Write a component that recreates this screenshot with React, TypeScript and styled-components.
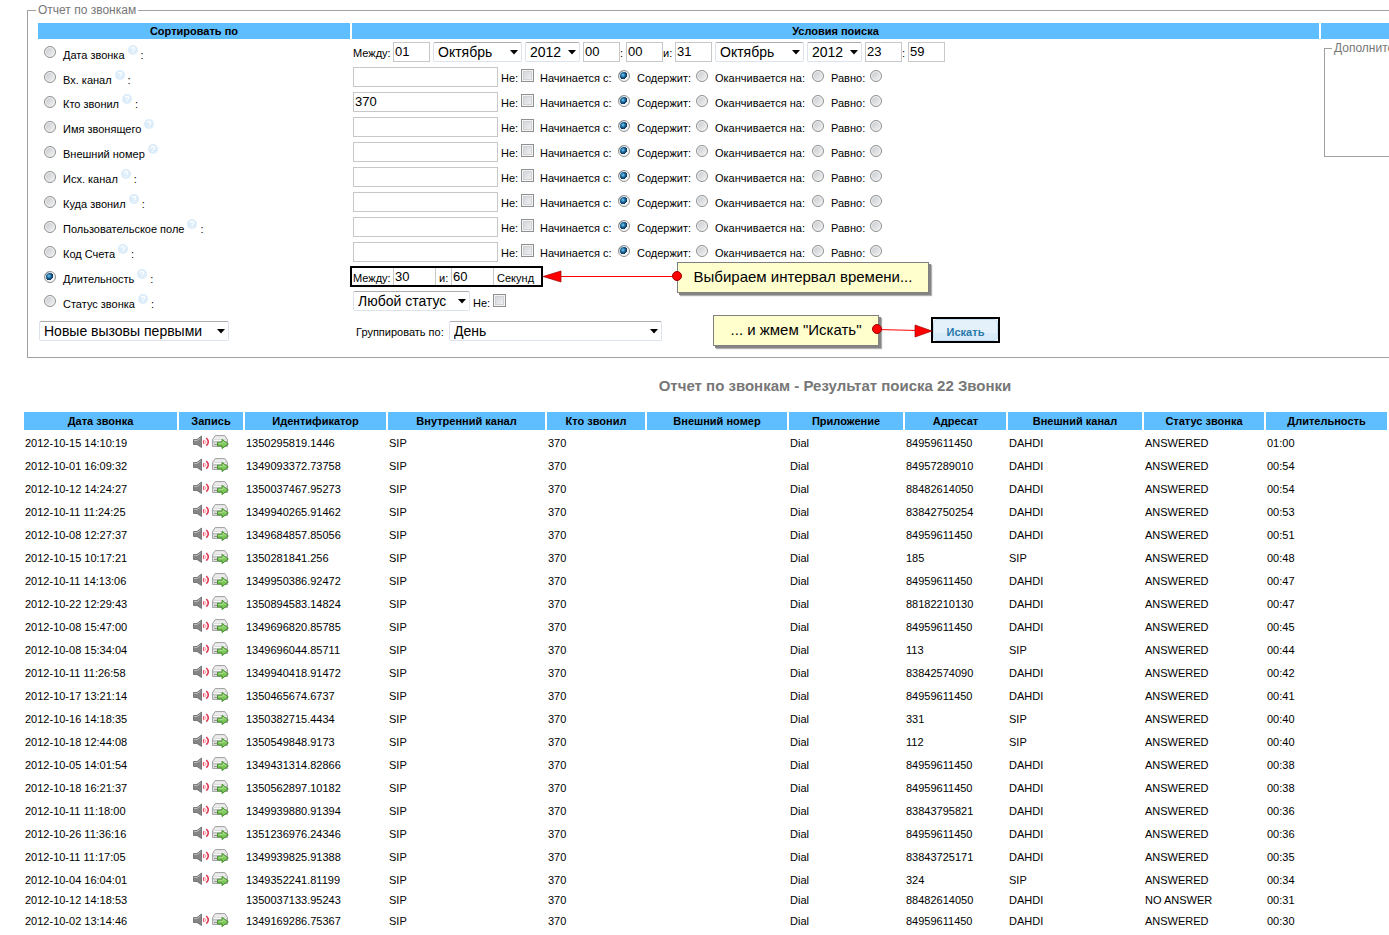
import React from "react";
import styled, { createGlobalStyle } from "styled-components";

const GlobalStyle = createGlobalStyle`
  * { box-sizing: border-box; }
  body {
    margin: 0;
    background: #fff;
    color: #000;
    font: 11px/14px "Liberation Sans", Arial, sans-serif;
  }
`;

const Page = styled.main`
  padding: 4px 0 0 22px;
  overflow: hidden;
`;

/* The search area is wider than the results and runs past the right edge. */
const SearchArea = styled.section`
  margin: 0 -254px 0 5px;
`;

const Fieldset = styled.fieldset`
  margin: 0;
  min-width: 0;
  padding: 6px 10px 8px;
  border: 1px solid #a0a0a0;
`;

const Legend = styled.legend`
  margin-left: -2px;
  padding: 0 2px;
  font-size: 12px;
  line-height: 13px;
  color: #777;
  white-space: nowrap;
`;

const FilterGrid = styled.div`
  display: grid;
  grid-template-columns: 312px 1fr 311px;
  column-gap: 2px;
`;

const ColumnTitle = styled.h2`
  margin: 0;
  height: 16px;
  background: #5fbeff;
  font-size: 11px;
  line-height: 16px;
  text-align: center;
`;

const Column = styled.div`
  position: relative;
`;

const FilterRow = styled.div<{ $h?: number }>`
  display: flex;
  align-items: center;
  height: ${(p) => p.$h ?? 25}px;
  padding-left: 1px;
  white-space: nowrap;
`;

const SortLabel = styled.label`
  display: flex;
  align-items: center;
  padding-left: 5px;
`;

const SortText = styled.span`
  padding: 5px 3px 0 7px;
`;

const Colon = styled.span`
  padding: 5px 0 0 3px;
`;

const HelpMark = styled.svg`
  width: 10px;
  height: 10px;
  margin-bottom: 5px;
`;

const Radio = styled.input.attrs({ type: "radio" })`
  appearance: none;
  flex: none;
  width: 12px;
  height: 12px;
  margin: 0;
  border: 1px solid #8e8f8f;
  border-radius: 50%;
  background: linear-gradient(135deg, #c4c8cd, #f4f4f4);
  box-shadow: inset 0 0 0 1px #f4f4f4;
  &:checked {
    background: radial-gradient(circle at 4px 4px, #7fd0f5 0, #1e6fa3 2px, #0d2f52 4px, #f4f4f4 4px);
  }
`;

const Checkbox = styled.input.attrs({ type: "checkbox" })`
  appearance: none;
  flex: none;
  width: 13px;
  height: 13px;
  margin: 0;
  border: 1px solid #8e8f8f;
  background: linear-gradient(135deg, #cbcfd5, #f6f6f6);
  box-shadow: inset 0 0 0 1px #f4f4f4, inset 0 0 0 2px #d0d2d5;
`;

const TextBox = styled.input<{ $w: number }>`
  width: ${(p) => p.$w}px;
  height: 20px;
  padding: 0 1px;
  border: 1px solid #c8c8c8;
  border-radius: 0;
  background: #fff;
  color: #000;
  font: 13px/18px "Liberation Sans", Arial, sans-serif;
`;

const SelectBox = styled.span<{ $w: number }>`
  position: relative;
  flex: none;
  width: ${(p) => p.$w}px;
  height: 20px;
  svg {
    position: absolute;
    top: 8px;
    right: 4px;
    pointer-events: none;
  }
`;

const Select = styled.select`
  appearance: none;
  width: 100%;
  height: 20px;
  padding: 0 14px 0 4px;
  border: 1px solid #dde3ec;
  border-top-color: #abadb3;
  border-radius: 2px;
  background: #fff;
  color: #000;
  font: 14px/18px "Liberation Sans", Arial, sans-serif;
`;

const Dates = styled.div`
  display: flex;
  align-items: center;
  gap: 3px;
`;

const TimePair = styled.span`
  display: flex;
  align-items: center;
`;

const Caption = styled.span<{ $w: number }>`
  width: ${(p) => p.$w}px;
  padding-top: 2px;
`;

const MatchRow = styled.div`
  display: grid;
  grid-template-columns: 148px 39px 97px 78px 116px 58px;
  align-items: center;
`;

const Choice = styled.label<{ $end: number }>`
  display: flex;
  align-items: center;
  justify-content: space-between;
  padding-right: ${(p) => p.$end}px;
  span { padding-top: 3px; }
  input { margin-bottom: 2px; }
`;

const StatusRow = styled.div`
  display: grid;
  grid-template-columns: 120px 39px;
  align-items: center;
`;

const Duration = styled.div`
  display: flex;
  align-items: center;
  height: 21px;
  margin-left: -3px;
  padding: 0 6px 0 1px;
  border: 2px solid #000;
  input {
    height: 17px;
    border-width: 0 1px;
  }
`;

const SearchFrame = styled.div`
  margin: -2px 0 0 269px;
  border: 2px solid #000;
  background: #fff;
`;

const SearchButton = styled.button`
  display: block;
  width: 65px;
  height: 22px;
  padding: 4px 0 0;
  border: 1px solid #c3ddf0;
  border-radius: 4px;
  background: linear-gradient(#e4f1fb 65%, #d7ebf9 65%);
  color: #2779aa;
  font: bold 11px/15px "Liberation Sans", Arial, sans-serif;
`;

const ExtraFieldset = styled(Fieldset)`
  height: 115px;
  margin: 3px 3px 0;
  padding: 0 9px;
`;

const Note = styled.div<{ $x: number; $y: number; $w: number }>`
  position: absolute;
  left: ${(p) => p.$x}px;
  top: ${(p) => p.$y}px;
  width: ${(p) => p.$w}px;
  height: 31px;
  border: 1px solid #808080;
  background: #ffffce;
  box-shadow: 2px 2px 0 #858585, 3px 3px 1px #b0b0b0;
  font-size: 15px;
  line-height: 28px;
  text-align: center;
  white-space: nowrap;
`;

const Arrows = styled.svg`
  position: absolute;
  left: 0;
  top: 0;
  pointer-events: none;
`;

const Title = styled.h1`
  margin: 18px 0 14px;
  color: #777;
  font-size: 15px;
  line-height: 20px;
  text-align: center;
`;

const Results = styled.table`
  width: 100%;
  table-layout: fixed;
  border-collapse: separate;
  border-spacing: 2px;
`;

const HeadCell = styled.th`
  padding: 1px 0;
  background: #5fbeff;
  line-height: 16px;
  white-space: nowrap;
`;

const Cell = styled.td`
  padding: 1px;
  white-space: nowrap;
`;

const RecordIcons = styled.div`
  display: flex;
  align-items: center;
  justify-content: center;
  gap: 2px;
  height: 19px;
  padding-bottom: 2px;
`;

const Help = () => (
  <HelpMark viewBox="0 0 10 10" aria-hidden="true">
    <circle cx="5" cy="5" r="5" fill="#dcedf9" />
    <path d="M3.4 4C3.4 1.9 6.7 1.9 6.7 3.9C6.7 5 5 5 5 6.3M5 7.2V8.2" fill="none" stroke="#fff" strokeWidth="1.2" />
  </HelpMark>
);

const SpeakerIcon = () => (
  <svg width="17" height="14" viewBox="0 0 17 14" aria-hidden="true">
    <path d="M.5 4.500H4L8.500 1V12.500L4 9.500H.5Z" fill="#858585" stroke="#666" strokeWidth=".8" />
    <path d="M1 5.500H4.200L7.500 3" fill="none" stroke="#bbb" />
    <path d="M11 5Q9.800 7 11 9" fill="none" stroke="#f0506a" strokeWidth="1.300" />
    <path d="M13.300 3Q17.300 7 13.300 10.700" fill="none" stroke="#e23a55" strokeWidth="1.600" />
    <path d="M12.300 5.500Q13.700 7 12.300 8.500" fill="none" stroke="#f59aa8" />
  </svg>
);

const DriveIcon = () => (
  <svg width="17" height="15" viewBox="0 0 17 15" aria-hidden="true">
    <path d="M3.200 1.500H12.800L15.500 5.500V12.500H.5V5.500Z" fill="#dcdcdc" stroke="#a6a6a6" />
    <path d="M3.500 2.500H12.500L14 5H2Z" fill="#ececec" />
    <path d="M1 6H15V8.500H1Z" fill="#c2c2c2" />
    <path d="M1.500 6.500H14.500" stroke="#fafafa" />
    <path d="M2 10.500H7" stroke="#999" />
    <path d="M5.500 8.200H10V5.300L16.300 10L10 14.600V12H5.500Z" fill="#7cc657" stroke="#3f8a2a" strokeWidth=".9" />
    <path d="M6.500 9.300H11V7.500L14 9.800" fill="none" stroke="#b5e59c" strokeWidth=".8" />
  </svg>
);

type PickProps = { width: number; label: string; options: string[] };
const Pick = ({ width, label, options }: PickProps) => (
  <SelectBox $w={width}>
    <Select aria-label={label}>
      {options.map((o) => (
        <option key={o}>{o}</option>
      ))}
    </Select>
    <svg width="8" height="5" viewBox="0 0 8 5" aria-hidden="true">
      <path d="M0 0H8L4 4.500Z" />
    </svg>
  </SelectBox>
);

const sortFields: { name: string; colon: boolean; h?: number }[] = [
  { name: "Дата звонка", colon: true, h: 26 },
  { name: "Вх. канал", colon: true, h: 24 },
  { name: "Кто звонил", colon: true },
  { name: "Имя звонящего", colon: false },
  { name: "Внешний номер", colon: false },
  { name: "Исх. канал", colon: true },
  { name: "Куда звонил", colon: true },
  { name: "Пользовательское поле", colon: true },
  { name: "Код Счета", colon: true },
  { name: "Длительность", colon: true },
  { name: "Статус звонка", colon: true, h: 24 },
];

const modes = ["Начинается с:", "Содержит:", "Оканчивается на:", "Равно:"];

const DateRange = () => (
  <Dates>
    <TimePair>
      <Caption $w={40}>Между:</Caption>
      <TextBox $w={37} defaultValue="01" aria-label="День начала" />
    </TimePair>
    <Pick width={89} label="Месяц начала" options={["Октябрь", "Ноябрь"]} />
    <Pick width={55} label="Год начала" options={["2012", "2011"]} />
    <TimePair>
      <TextBox $w={37} defaultValue="00" aria-label="Час начала" />
      <Caption $w={6}>:</Caption>
      <TextBox $w={37} defaultValue="00" aria-label="Минута начала" />
      <Caption $w={12}>и:</Caption>
      <TextBox $w={37} defaultValue="31" aria-label="День конца" />
    </TimePair>
    <Pick width={89} label="Месяц конца" options={["Октябрь", "Ноябрь"]} />
    <Pick width={55} label="Год конца" options={["2012", "2011"]} />
    <TimePair>
      <TextBox $w={37} defaultValue="23" aria-label="Час конца" />
      <Caption $w={6}>:</Caption>
      <TextBox $w={37} defaultValue="59" aria-label="Минута конца" />
    </TimePair>
  </Dates>
);

const Not = () => (
  <Choice $end={6}>
    <span>Не:</span>
    <Checkbox />
  </Choice>
);

const Match = ({ name }: { name: string }) => (
  <MatchRow>
    <TextBox $w={145} aria-label={name} defaultValue={name === "Кто звонил" ? "370" : ""} />
    <Not />
    {modes.map((m, i) => (
      <Choice key={m} $end={7}>
        <span>{m}</span>
        <Radio name={`mode-${name}`} defaultChecked={i === 0} />
      </Choice>
    ))}
  </MatchRow>
);

const columns: [string, number][] = [
  ["Дата звонка", 153],
  ["Запись", 64],
  ["Идентификатор", 141],
  ["Внутренний канал", 157],
  ["Кто звонил", 98],
  ["Внешний номер", 140],
  ["Приложение", 114],
  ["Адресат", 101],
  ["Внешний канал", 134],
  ["Статус звонка", 120],
  ["Длительность", 121],
];

const calls = [
  ["2012-10-15 14:10:19", "1350295819.1446", "84959611450", "DAHDI", "01:00"],
  ["2012-10-01 16:09:32", "1349093372.73758", "84957289010", "DAHDI", "00:54"],
  ["2012-10-12 14:24:27", "1350037467.95273", "88482614050", "DAHDI", "00:54"],
  ["2012-10-11 11:24:25", "1349940265.91462", "83842750254", "DAHDI", "00:53"],
  ["2012-10-08 12:27:37", "1349684857.85056", "84959611450", "DAHDI", "00:51"],
  ["2012-10-15 10:17:21", "1350281841.256", "185", "SIP", "00:48"],
  ["2012-10-11 14:13:06", "1349950386.92472", "84959611450", "DAHDI", "00:47"],
  ["2012-10-22 12:29:43", "1350894583.14824", "88182210130", "DAHDI", "00:47"],
  ["2012-10-08 15:47:00", "1349696820.85785", "84959611450", "DAHDI", "00:45"],
  ["2012-10-08 15:34:04", "1349696044.85711", "113", "SIP", "00:44"],
  ["2012-10-11 11:26:58", "1349940418.91472", "83842574090", "DAHDI", "00:42"],
  ["2012-10-17 13:21:14", "1350465674.6737", "84959611450", "DAHDI", "00:41"],
  ["2012-10-16 14:18:35", "1350382715.4434", "331", "SIP", "00:40"],
  ["2012-10-18 12:44:08", "1350549848.9173", "112", "SIP", "00:40"],
  ["2012-10-05 14:01:54", "1349431314.82866", "84959611450", "DAHDI", "00:38"],
  ["2012-10-18 16:21:37", "1350562897.10182", "84959611450", "DAHDI", "00:38"],
  ["2012-10-11 11:18:00", "1349939880.91394", "83843795821", "DAHDI", "00:36"],
  ["2012-10-26 11:36:16", "1351236976.24346", "84959611450", "DAHDI", "00:36"],
  ["2012-10-11 11:17:05", "1349939825.91388", "83843725171", "DAHDI", "00:35"],
  ["2012-10-04 16:04:01", "1349352241.81199", "324", "SIP", "00:34"],
  ["2012-10-12 14:18:53", "1350037133.95243", "88482614050", "DAHDI", "00:31", "NO ANSWER"],
  ["2012-10-02 13:14:46", "1349169286.75367", "84959611450", "DAHDI", "00:30"],
];

export default function App() {
  return (
    <Page>
      <GlobalStyle />
      <SearchArea>
        <Fieldset>
          <Legend>Отчет по звонкам</Legend>
          <FilterGrid>
            <Column>
              <ColumnTitle>Сортировать по</ColumnTitle>
              {sortFields.map((f) => (
                <FilterRow key={f.name} $h={f.h}>
                  <SortLabel>
                    <Radio name="sort" defaultChecked={f.name === "Длительность"} />
                    <SortText>{f.name}</SortText>
                    <Help />
                    {f.colon && <Colon>:</Colon>}
                  </SortLabel>
                </FilterRow>
              ))}
              <FilterRow $h={36}>
                <Pick width={190} label="Порядок" options={["Новые вызовы первыми", "Старые вызовы первыми"]} />
              </FilterRow>
            </Column>

            <Column>
              <ColumnTitle>Условия поиска</ColumnTitle>
              <FilterRow>
                <DateRange />
              </FilterRow>
              {sortFields.slice(1, 9).map((f) => (
                <FilterRow key={f.name}>
                  <Match name={f.name} />
                </FilterRow>
              ))}
              <FilterRow>
                <Duration>
                  <Caption $w={40}>Между:</Caption>
                  <TextBox $w={43} defaultValue="30" aria-label="Длительность от" />
                  <Caption $w={15}>&nbsp;и:</Caption>
                  <TextBox $w={43} defaultValue="60" aria-label="Длительность до" />
                  <Caption $w={41}>&nbsp;Секунд</Caption>
                </Duration>
              </FilterRow>
              <FilterRow $h={24}>
                <StatusRow>
                  <Pick width={117} label="Статус" options={["Любой статус", "ANSWERED"]} />
                  <Not />
                </StatusRow>
              </FilterRow>
              <FilterRow $h={36}>
                <Caption $w={96}>&nbsp;Группировать по:</Caption>
                <Pick width={213} label="Группировать по" options={["День", "Месяц"]} />
                <SearchFrame>
                  <SearchButton type="button">Искать</SearchButton>
                </SearchFrame>
              </FilterRow>

              <Note $x={325} $y={239} $w={252}>Выбираем интервал времени...</Note>
              <Note $x={361} $y={292} $w={166}>... и жмем "Искать"</Note>
              <Arrows width="600" height="330" aria-hidden="true">
                <path d="M208 253.500H325M525 306.500L566 307.500" stroke="#f00" />
                <path d="M191 253.500L209 248V259Z" fill="#f00" stroke="#900" strokeWidth=".7" />
                <path d="M580 308L563 302V314Z" fill="#f00" stroke="#900" strokeWidth=".7" />
                <circle cx="325" cy="253" r="4.500" fill="#f00" stroke="#900" />
                <circle cx="525" cy="306" r="4.500" fill="#f00" stroke="#900" />
              </Arrows>
            </Column>

            <Column>
              <ColumnTitle>&nbsp;</ColumnTitle>
              <ExtraFieldset>
                <Legend>Дополнительные опции</Legend>
              </ExtraFieldset>
            </Column>
          </FilterGrid>
        </Fieldset>
        <Title>Отчет по звонкам - Результат поиска 22 Звонки</Title>
      </SearchArea>

      <Results>
        <colgroup>
          {columns.map(([name, w]) => (
            <col key={name} width={w} />
          ))}
        </colgroup>
        <thead>
          <tr>
            {columns.map(([name]) => (
              <HeadCell key={name} scope="col">{name}</HeadCell>
            ))}
          </tr>
        </thead>
        <tbody>
          {calls.map(([date, id, to, channel, length, status = "ANSWERED"]) => (
            <tr key={id}>
              <Cell>{date}</Cell>
              <Cell>
                {status === "ANSWERED" && (
                  <RecordIcons>
                    <SpeakerIcon />
                    <DriveIcon />
                  </RecordIcons>
                )}
              </Cell>
              <Cell>{id}</Cell>
              <Cell>SIP</Cell>
              <Cell>370</Cell>
              <Cell></Cell>
              <Cell>Dial</Cell>
              <Cell>{to}</Cell>
              <Cell>{channel}</Cell>
              <Cell>{status}</Cell>
              <Cell>{length}</Cell>
            </tr>
          ))}
        </tbody>
      </Results>
    </Page>
  );
}
